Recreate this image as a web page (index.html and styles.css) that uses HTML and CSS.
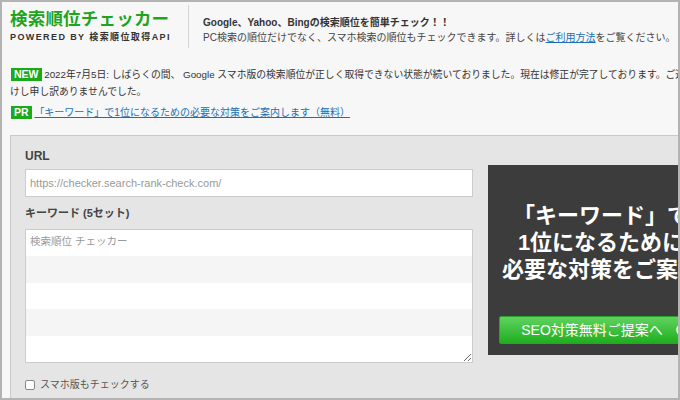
FILE: index.html
```html
<!DOCTYPE html>
<html lang="ja">
<head>
    <meta charset="UTF-8">
    <meta name="viewport" content="width=device-width, initial-scale=1.0">
    <title>検索順位チェッカー</title>
    <link rel="stylesheet" href="styles.css">
</head>
<body>
    <div class="frame">
        <div class="page">
            <div class="header">
                <div class="logo">
                    <h1 class="logo-title">検索順位チェッカー</h1>
                    <p class="logo-sub">POWERED BY 検索順位取得API</p>
                </div>
                <div class="intro">
                    <p class="intro-lead">Google、Yahoo、Bingの検索順位を簡単チェック！！</p>
                    <p>PC検索の順位だけでなく、スマホ検索の順位もチェックできます。詳しくは<a href="#">ご利用方法</a>をご覧ください。</p>
                </div>
            </div>

            <p class="notice"><span class="badge">NEW</span> 2022年7月5日: しばらくの間、 Google スマホ版の検索順位が正しく取得できない状態が続いておりました。現在は修正が完了しております。ご迷惑をおか<br>けし申し訳ありませんでした。</p>
            <p class="pr"><span class="badge">PR</span> <a href="#">「キーワード」で1位になるための必要な対策をご案内します（無料）</a></p>

            <form class="panel">
                <div class="fields">
                    <label class="field-label" for="url">URL</label>
                    <input class="url-input" id="url" type="text" placeholder="https://checker.search-rank-check.com/">

                    <label class="field-label keyword-label" for="keywords">キーワード (5セット)</label>
                    <textarea class="keywords" id="keywords" placeholder="検索順位 チェッカー"></textarea>

                    <label class="check-row">
                        <input class="check" type="checkbox">
                        <span>スマホ版もチェックする</span>
                    </label>
                </div>

                <div class="ad">
                    <p class="ad-text">「キーワード」で<br>1位になるために<br>必要な対策をご案内</p>
                    <a class="ad-button" href="#">
                        SEO対策無料ご提案へ
                        <svg class="ad-arrow" width="14" height="14" viewBox="0 0 14 14">
                            <circle cx="7" cy="7" r="6" fill="none" stroke="#fff" stroke-width="1.5"/>
                            <path d="M6 4.5 L8.5 7 L6 9.5" fill="none" stroke="#fff" stroke-width="1.5"/>
                        </svg>
                    </a>
                </div>
            </form>
        </div>
    </div>
</body>
</html>
```

FILE: styles.css
```css
* {
    margin: 0;
    padding: 0;
    box-sizing: border-box;
}

body {
    font-family: "Liberation Sans", "Noto Sans CJK JP", sans-serif;
    background-color: #fff;
}

a {
    color: #1a6fb5;
    text-decoration: underline;
}

.frame {
    width: 680px;
    height: 400px;
    border: 2px solid #b3b3b3;
    background-color: #f7f7f7;
    overflow: hidden;
}

.page {
    width: 760px;
    padding: 3px 0 0 8px;
}

/* header */

.header {
    display: flex;
    align-items: flex-start;
}

.logo {
    width: 178px;
    padding-top: 3px;
}

.logo-title {
    font-size: 17.5px;
    line-height: 22px;
    font-weight: bold;
    letter-spacing: 0.2px;
    color: #1ea51e;
}

.logo-sub {
    font-size: 9px;
    line-height: 14px;
    font-weight: bold;
    letter-spacing: 1.4px;
    color: #333;
}

.intro {
    border-left: 1px solid #d4d4d4;
    padding: 10px 0 3px 14px;
    font-size: 10px;
    line-height: 15px;
    color: #444;
}

.intro-lead {
    font-weight: bold;
    color: #333;
}

/* notices */

.notice,
.pr {
    font-size: 10px;
    line-height: 17px;
    color: #333;
    white-space: nowrap;
}

.notice {
    margin-top: 18px;
    font-size: 9.8px;
}

.pr {
    margin-top: 4px;
}

.badge {
    display: inline-block;
    background-color: #1aaa1a;
    color: #fff;
    font-weight: bold;
    font-size: 10.5px;
    line-height: 13px;
    padding: 0 3px;
    margin-left: 1px;
}

/* form */

.panel {
    display: flex;
    align-items: flex-start;
    gap: 15px;
    width: max-content;
    margin-top: 14px;
    padding: 12px 14px 20px;
    border: 1px solid #c8c8c8;
    background-color: #e5e5e5;
}

.fields {
    flex-shrink: 0;
    width: 448px;
    display: flex;
    flex-direction: column;
}

.field-label {
    font-size: 12px;
    line-height: 16px;
    font-weight: bold;
    color: #444;
}

.keyword-label {
    font-size: 11px;
    margin-top: 8px;
}

.url-input {
    height: 28px;
    margin-top: 5px;
    padding: 0 4px;
    border: 1px solid #ccc;
    background-color: #fff;
    font-family: inherit;
    font-size: 11px;
    color: #333;
}

.keywords {
    height: 134px;
    margin-top: 8px;
    padding: 3px 4px;
    border: 1px solid #ccc;
    background: repeating-linear-gradient(#fff 0, #fff 26.4px, #f5f5f5 26.4px, #f5f5f5 52.8px);
    font-family: inherit;
    font-size: 10.5px;
    line-height: 16px;
    color: #333;
}

.url-input::placeholder,
.keywords::placeholder {
    color: #999;
}

.check-row {
    display: flex;
    align-items: center;
    gap: 5px;
    margin-top: 14px;
    font-size: 10px;
    line-height: 16px;
    color: #555;
}

.check {
    appearance: none;
    width: 10px;
    height: 10px;
    border: 1px solid #888;
    border-radius: 2px;
    background-color: #fff;
}

/* ad box */

.ad {
    flex-shrink: 0;
    width: 226px;
    margin-top: 17px;
    padding: 37px 11px 11px;
    background-color: #3c3c3c;
    display: flex;
    flex-direction: column;
}

.ad-text {
    font-size: 22px;
    line-height: 27px;
    font-weight: bold;
    color: #fff;
    text-align: center;
    white-space: nowrap;
}

.ad-button {
    position: relative;
    display: block;
    height: 28px;
    margin-top: 33px;
    padding-right: 18px;
    border: 1px solid #2f9f2f;
    border-radius: 2px;
    background: linear-gradient(#5fd35f, #1fae1f);
    color: #fff;
    font-size: 14px;
    line-height: 26px;
    text-align: center;
    text-decoration: none;
}

.ad-arrow {
    position: absolute;
    right: 12px;
    top: 6px;
}
```
